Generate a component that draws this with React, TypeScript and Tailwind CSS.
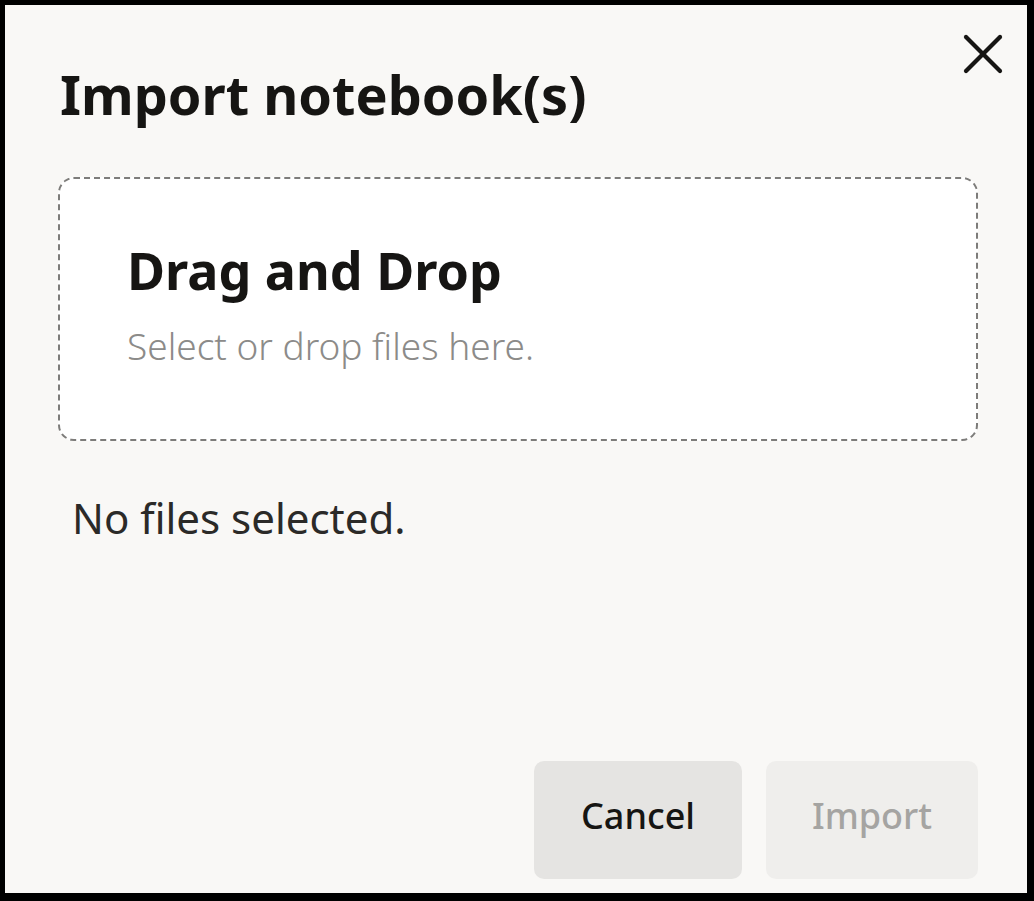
const font = { fontFamily: '"Noto Sans", "Open Sans", sans-serif' };

const CloseIcon = () => (
  <svg width="40" height="40" viewBox="0 0 40 40" fill="none" stroke="#161513" strokeWidth="4.2" strokeLinecap="round">
    <line x1="3" y1="3" x2="37" y2="37" />
    <line x1="37" y1="3" x2="3" y2="37" />
  </svg>
);

export default function App() {
  return (
    <div
      className="flex flex-col w-[1034px] h-[901px] border-solid border-black border-t-[5px] border-l-[5px] border-r-[7px] border-b-[8px] bg-[#f9f8f6] pl-[53px] pr-[49px] text-[#161513]"
      style={font}
    >
      <div className="flex items-start justify-between">
        <h1 className="mt-[62px] ml-[2px] text-[54px] leading-[54px] font-bold">Import notebook(s)</h1>
        <button className="mt-[29px] -mr-[25px] cursor-pointer">
          <CloseIcon />
        </button>
      </div>

      <div className="mt-[56px] h-[264px] rounded-[16px] border-2 border-dashed border-[#7d7c7a] bg-white pl-[67px] pt-[65px]">
        <div className="text-[52px] leading-[52px] font-bold">Drag and Drop</div>
        <div className="mt-[31px] text-[37px] leading-[37px] font-light text-[#8c8b89]">Select or drop files here.</div>
      </div>

      <div className="mt-[56px] ml-[14px] text-[42px] leading-[42px] text-[#2b2a28]">No files selected.</div>

      <div className="mt-auto mb-[14px] flex justify-end gap-[24px]">
        <button className="w-[208px] h-[118px] pb-[8px] rounded-[10px] bg-[#e5e4e2] text-[36px] font-medium text-[#161513] cursor-pointer">
          Cancel
        </button>
        <button disabled className="w-[212px] h-[118px] pb-[8px] rounded-[10px] bg-[#efeeec] text-[36px] font-medium text-[#a5a4a2]">
          Import
        </button>
      </div>
    </div>
  );
}
